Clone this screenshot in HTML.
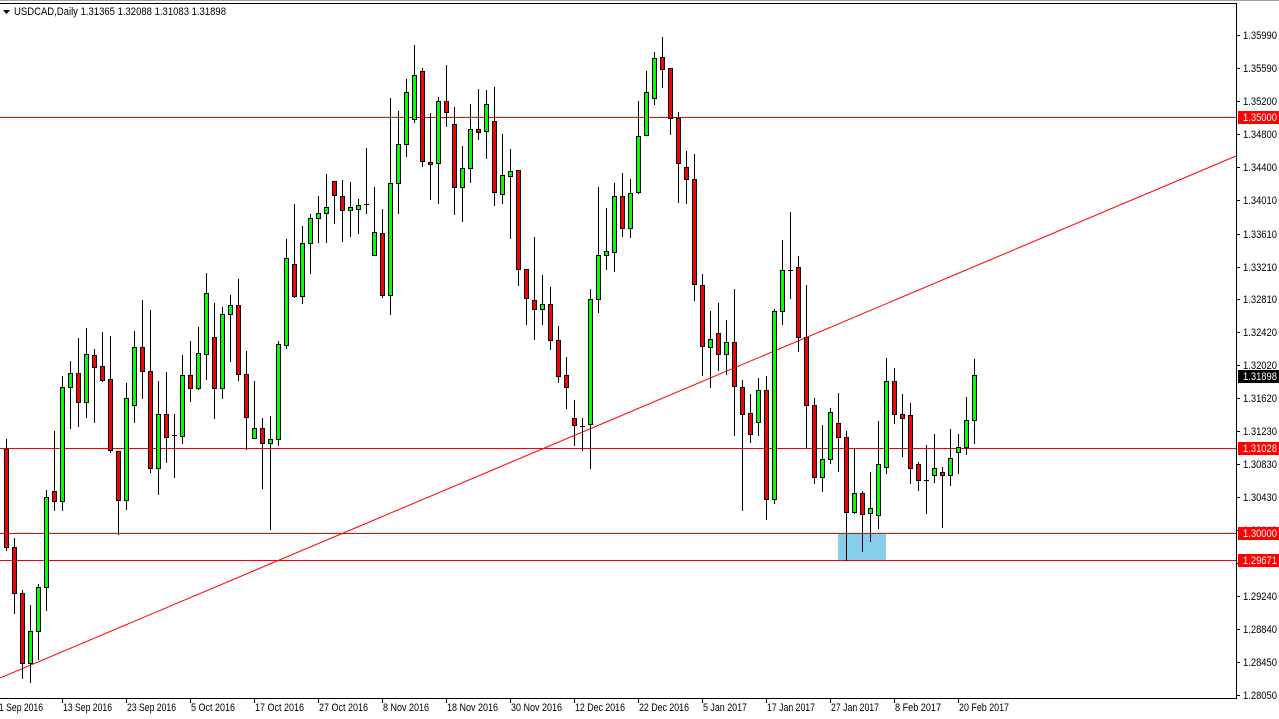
<!DOCTYPE html>
<html><head><meta charset="utf-8"><style>
html,body{margin:0;padding:0;background:#fff;}
svg{display:block;font-family:"Liberation Sans",Tahoma,sans-serif;font-size:11px;}
</style></head><body>
<svg id="s" width="1279" height="719" viewBox="0 0 1279 719" xmlns="http://www.w3.org/2000/svg" shape-rendering="crispEdges">
<rect x="0" y="0" width="1279" height="719" fill="#fff"/>
<rect x="0" y="0" width="1279" height="1" fill="#a0a0a0"/>
<rect x="0" y="3" width="1237" height="1" fill="#000"/>
<rect x="1236" y="3" width="1" height="696" fill="#000"/>
<rect x="0" y="698" width="1237" height="1" fill="#000"/>
<rect x="838" y="533" width="48" height="27" fill="#87ceeb"/>
<g fill="#ff0000">
<rect x="0" y="117" width="1236" height="1"/>
<rect x="0" y="448" width="1236" height="1"/>
<rect x="0" y="533" width="1236" height="1"/>
<rect x="0" y="560" width="1236" height="1"/>
</g>
<line x1="0" y1="678" x2="1236" y2="156" stroke="#ff0000" stroke-width="1" shape-rendering="auto"/>
<g id="candles"></g>
<polygon points="3,10 10,10 6.5,14" fill="#000" shape-rendering="auto"/>
<text x="14" y="15" fill="#000" textLength="212" lengthAdjust="spacingAndGlyphs">USDCAD,Daily  1.31365 1.32088 1.31083 1.31898</text>
<g id="pt" fill="#000"></g>
<g id="dt" fill="#000"></g>
<g font-size="11">
<rect x="1238" y="111" width="41" height="13" fill="#ff0000"/><text x="1243" y="121" fill="#fff" textLength="34" lengthAdjust="spacingAndGlyphs">1.35000</text>
<rect x="1238" y="370" width="41" height="13" fill="#000"/><text x="1243" y="380" fill="#fff" textLength="34" lengthAdjust="spacingAndGlyphs">1.31898</text>
<rect x="1238" y="442" width="41" height="13" fill="#ff0000"/><text x="1243" y="452" fill="#fff" textLength="34" lengthAdjust="spacingAndGlyphs">1.31028</text>
<rect x="1238" y="527" width="41" height="13" fill="#ff0000"/><text x="1243" y="537" fill="#fff" textLength="34" lengthAdjust="spacingAndGlyphs">1.30000</text>
<rect x="1238" y="554" width="41" height="13" fill="#ff0000"/><text x="1243" y="564" fill="#fff" textLength="34" lengthAdjust="spacingAndGlyphs">1.29671</text>
</g>
</svg>
<script>
var D=[
[439,449,547,550],[538,547,593,613],[590,593,663,678],[605,663,631,682],[584,631,587,659],[490,587,497,610],
[431,491,501,510],[376,501,387,510],[361,387,373,428],[338,373,402,426],[328,402,354,417],[349,355,367,422],
[332,366,380,381],[336,379,450,452],[451,451,500,534],[383,500,398,509],[331,405,347,422],[300,347,371,398],
[310,371,468,472],[381,468,414,494],[372,414,437,462],[414,435,435,477],[355,436,375,443],[341,375,388,401],
[327,388,353,389],[273,354,293,379],[303,337,388,418],[307,388,314,398],[295,314,305,361],[279,305,374,380],
[351,374,417,449],[381,438,428,438],[418,428,443,488],[416,443,439,529],[341,439,344,445],[239,345,258,348],
[204,264,296,297],[226,296,243,303],[214,243,218,273],[196,218,213,242],[174,213,207,242],[181,181,195,223],
[180,196,210,241],[182,210,207,236],[199,209,205,233],[148,204,204,213],[187,255,232,255],[209,233,295,297],
[98,295,183,314],[111,183,144,213],[79,144,92,156],[45,119,75,122],[68,71,161,166],[113,162,164,199],
[97,163,101,203],[65,101,112,126],[107,124,187,214],[146,187,168,221],[104,168,129,182],[89,129,132,139],
[90,131,104,158],[87,121,192,205],[134,194,175,203],[149,176,171,238],[170,170,269,285],[269,269,298,324],
[237,300,309,339],[275,309,304,324],[287,304,340,349],[326,340,376,382],[357,375,387,408],[400,418,425,445],
[418,426,426,450],[289,424,299,468],[187,299,255,312],[208,255,251,269],[183,252,196,271],[173,196,228,236],
[179,228,193,237],[101,192,136,193],[71,135,92,135],[52,98,58,104],[37,57,69,87],[68,68,118,134],
[112,118,163,202],[151,167,179,203],[154,179,284,300],[274,285,346,375],[311,347,339,387],[303,333,354,370],
[320,354,342,374],[289,342,386,435],[380,387,414,510],[394,413,434,442],[378,422,390,435],[376,390,499,519],
[309,499,311,503],[240,311,270,324],[212,270,270,298],[256,267,337,351],[285,337,405,447],[398,405,477,483],
[425,477,459,491],[408,459,412,463],[393,423,437,471],[431,437,512,560],[448,512,493,513],[491,493,514,551],
[472,513,508,541],[421,515,464,528],[358,467,381,473],[368,381,414,423],[394,414,418,456],[403,415,468,483],
[462,464,480,490],[445,480,480,513],[434,475,468,482],[467,472,475,527],[429,475,458,485],[434,452,447,473],
[397,447,420,454],[359,420,375,443]];
var NS="http://www.w3.org/2000/svg",g=document.getElementById('candles');
function R(p,x,y,w,h,f){var r=document.createElementNS(NS,'rect');r.setAttribute('x',x);r.setAttribute('y',y);r.setAttribute('width',w);r.setAttribute('height',Math.max(h,1));r.setAttribute('fill',f);p.appendChild(r);}
function T(p,x,y,s,len){var t=document.createElementNS(NS,'text');t.setAttribute('x',x);t.setAttribute('y',y);t.setAttribute('textLength',len);t.setAttribute('lengthAdjust','spacingAndGlyphs');t.textContent=s;p.appendChild(t);}
D.forEach(function(d,i){var c=6+8*i,H=d[0],O=d[1],C=d[2],L=d[3];
var t=Math.min(O,C),b=Math.max(O,C);
R(g,c,Math.min(H,t),1,Math.max(L,b)-Math.min(H,t)+1,'#000');
R(g,c-2,t,5,b-t+1,'#000');
if(b-t>=2)R(g,c-1,t+1,3,b-t-1,C<O?'#00ff00':'#ff0000');});
var pt=document.getElementById('pt');
[["1.35990",35],["1.35590",68],["1.35200",101],["1.34800",134],["1.34400",167],["1.34010",200],["1.33610",234],["1.33210",267],["1.32810",299],["1.32420",332],["1.32020",365],["1.31620",398],["1.31230",431],["1.30830",464],["1.30430",497],["1.30040",530],["1.29640",563],["1.29240",596],["1.28840",629],["1.28450",662],["1.28050",695]].forEach(function(a){
R(pt,1237,a[1],3,1,'#000');T(pt,1243,a[1]+4,a[0],34);});
var dt=document.getElementById('dt');
[["1 Sep 2016",-2,44],["13 Sep 2016",62,49],["23 Sep 2016",126,49],["5 Oct 2016",190,44],["17 Oct 2016",254,49],["27 Oct 2016",318,49],["8 Nov 2016",382,46],["18 Nov 2016",446,51],["30 Nov 2016",510,51],["12 Dec 2016",574,50],["22 Dec 2016",638,50],["5 Jan 2017",702,44],["17 Jan 2017",766,48],["27 Jan 2017",830,48],["8 Feb 2017",894,46],["20 Feb 2017",958,50]].forEach(function(a){
R(dt,a[1],699,1,4,'#000');T(dt,a[1]+1,711,a[0],a[2]);});
</script>
</body></html>
